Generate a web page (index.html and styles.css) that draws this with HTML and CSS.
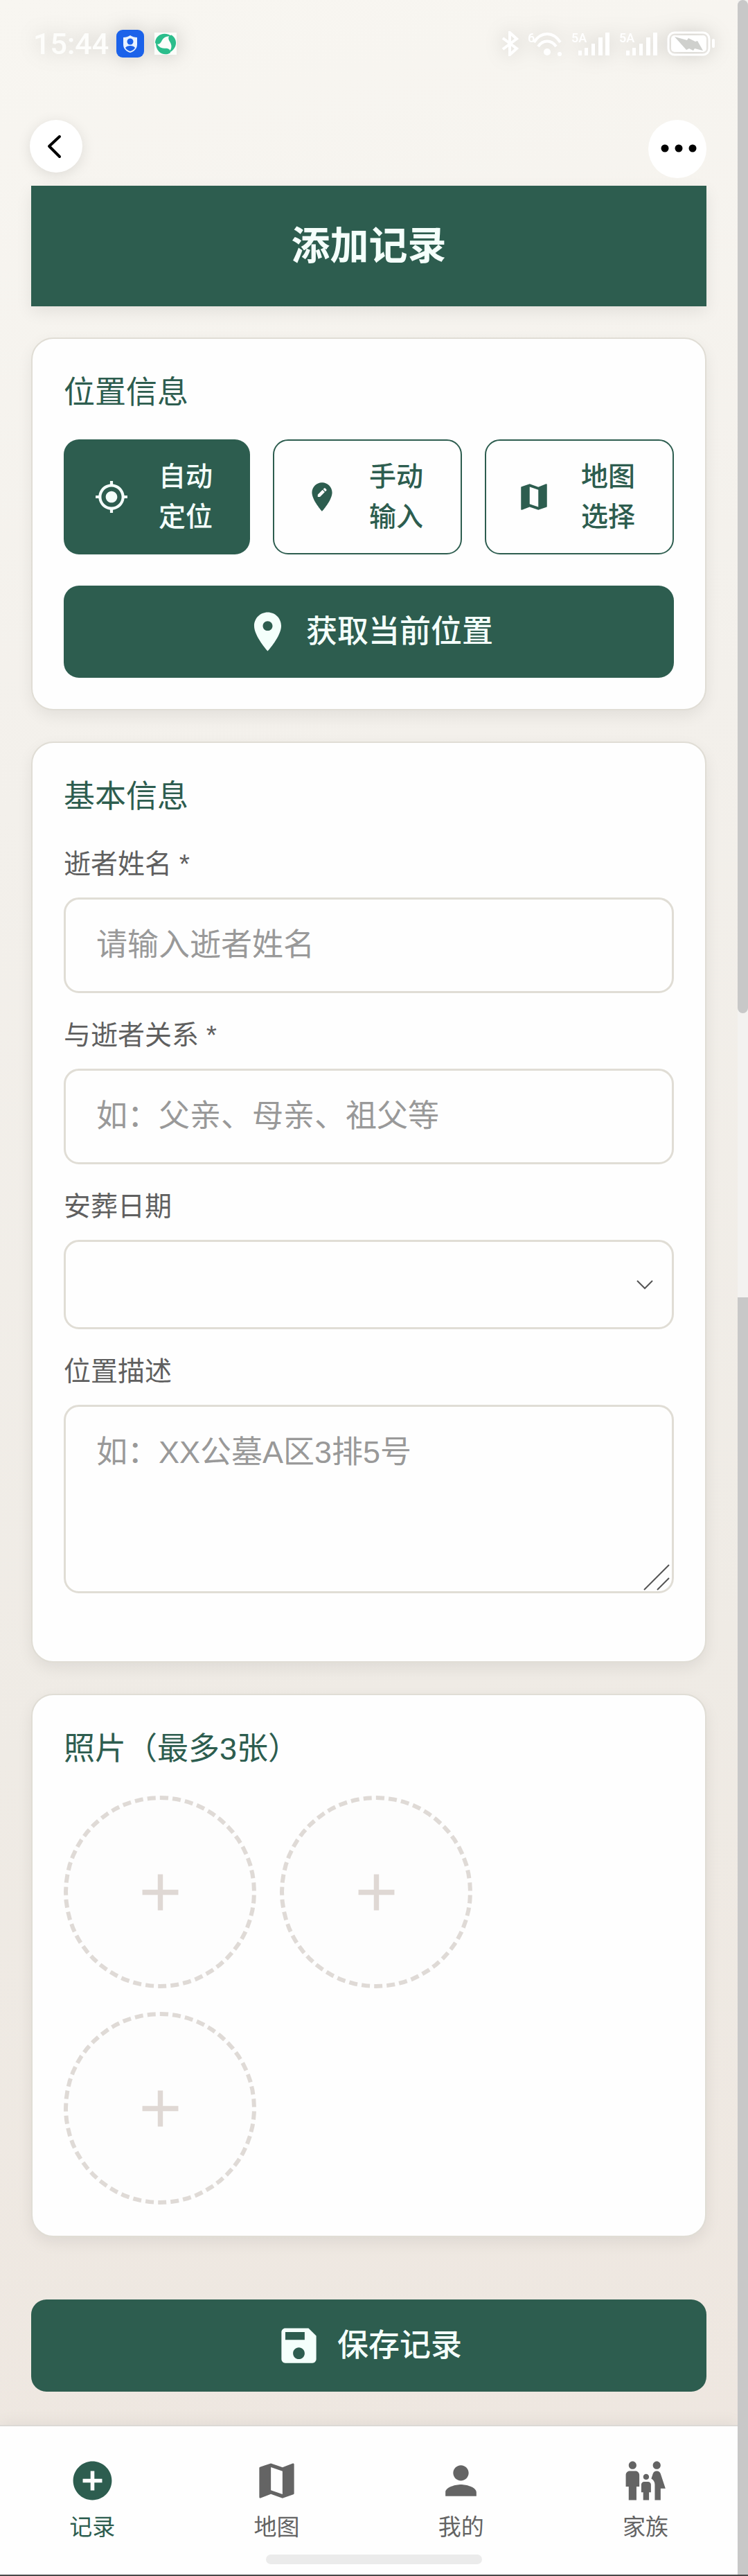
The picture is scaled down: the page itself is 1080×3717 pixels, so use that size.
FILE: index.html
```html
<!DOCTYPE html>
<html lang="zh-CN">
<head>
<meta charset="utf-8">
<meta name="viewport" content="width=device-width, initial-scale=1">
<title>添加记录</title>
<link rel="stylesheet" href="styles.css">
</head>
<body>
<div class="screen">
  <div class="app">
    <div class="status-bar">
      <div class="status-group status-left">
        <span class="clock">15:44</span>
        <svg class="badge-shield" viewBox="0 0 40 40" aria-hidden="true">
          <rect width="40" height="40" rx="9" fill="#1b62ea"/>
          <path d="M20 8c3 2 6 3 10 3v10c0 6-4 10-10 12-6-2-10-6-10-12V11c4 0 7-1 10-3z" fill="#e9f3ff"/>
          <circle cx="20" cy="17" r="4.500" fill="#1b62ea"/>
          <path d="M13 26c2-4 12-4 14 0-2 3-4 4-7 5-3-1-5-2-7-5z" fill="#1b62ea"/>
        </svg>
        <svg class="badge-swirl" viewBox="0 0 32 32" aria-hidden="true">
          <rect width="32" height="32" fill="#fbfdfa"/>
          <g fill="#2bbd8b">
            <path d="M1 15C1 3 15-3 26 6c-7-2-12 0-15 5-2 5-6 8-10 4z"/>
            <path d="M1 15C1 3 15-3 26 6c-7-2-12 0-15 5-2 5-6 8-10 4z" transform="rotate(120 16 16)"/>
            <path d="M1 15C1 3 15-3 26 6c-7-2-12 0-15 5-2 5-6 8-10 4z" transform="rotate(240 16 16)"/>
          </g>
        </svg>
      </div>
      <div class="status-group status-right">
        <svg class="bluetooth" viewBox="0 0 26 36" aria-hidden="true"><path d="M3 10l20 15-10 9V2l10 9L3 26" fill="none" stroke="#fff" stroke-width="4"/></svg>
        <svg class="wifi" viewBox="0 0 50 36" aria-hidden="true">
          <g fill="none" stroke="#fff" stroke-width="4"><path d="M9 16c10-16 28-16 38 0"/><path d="M15 22c7-10 19-10 26 0"/></g>
          <circle cx="28" cy="30" r="5" fill="#fff"/><circle cx="46" cy="33" r="3" fill="#fff"/>
          <text x="0" y="16" class="tiny">6</text>
        </svg>
        <svg class="signal" viewBox="0 0 56 36" aria-hidden="true">
          <text x="0" y="16" class="tiny">5A</text>
          <path d="M10 28h5v7h-5zM19 24h5v11h-5zM29 18h5v17h-5zM39 9h6v26h-6zM49 2h6v33h-6z" fill="#fff"/>
        </svg>
        <svg class="signal" viewBox="0 0 56 36" aria-hidden="true">
          <text x="0" y="16" class="tiny">5A</text>
          <path d="M10 28h5v7h-5zM19 24h5v11h-5zM29 18h5v17h-5zM39 9h6v26h-6zM49 2h6v33h-6z" fill="#fff"/>
        </svg>
        <svg class="battery" viewBox="0 0 70 36" aria-hidden="true">
          <rect x="2" y="2" width="59" height="32" rx="9" fill="none" stroke="#fff" stroke-width="3"/>
          <rect x="6" y="6" width="51" height="24" rx="5" fill="#fff"/>
          <path d="M11 8l18 5 2-3 10 5 3-1 8 14-12-3-2 3-6-3-4 2z" fill="#cfd0cd"/>
          <rect x="65" y="11" width="4" height="13" rx="2" fill="#fff"/>
        </svg>
      </div>
    </div>

    <div class="toolbar">
      <button class="round-btn back-btn" type="button" aria-label="返回">
        <svg viewBox="0 0 76 76" aria-hidden="true"><path d="M43 24L28 38l15 15" fill="none" stroke="#000" stroke-width="4" stroke-linecap="round" stroke-linejoin="round"/></svg>
      </button>
      <button class="round-btn more-btn" type="button" aria-label="更多">
        <svg viewBox="0 0 84 84" aria-hidden="true"><circle cx="24" cy="41" r="5.500"/><circle cx="44" cy="41" r="5.500"/><circle cx="64" cy="41" r="5.500"/></svg>
      </button>
    </div>

    <main class="content">
      <header class="page-header"><h1>添加记录</h1></header>

      <section class="card">
        <h2>位置信息</h2>
        <div class="modes">
          <button class="mode mode-active" type="button">
            <svg viewBox="0 0 24 24" aria-hidden="true"><path d="M12 8c-2.210 0-4 1.790-4 4s1.790 4 4 4 4-1.790 4-4-1.790-4-4-4zm8.940 3c-.46-4.170-3.770-7.480-7.940-7.940V1h-2v2.060C6.830 3.520 3.520 6.830 3.060 11H1v2h2.060c.46 4.170 3.770 7.480 7.940 7.940V23h2v-2.060c4.170-.46 7.480-3.770 7.940-7.940H23v-2h-2.060zM12 19c-3.870 0-7-3.130-7-7s3.130-7 7-7 7 3.130 7 7-3.130 7-7 7z"/></svg>
            <span>自动定位</span>
          </button>
          <button class="mode" type="button">
            <svg viewBox="0 0 24 24" aria-hidden="true"><path d="M12 2C8.140 2 5 5.140 5 9c0 5.250 7 13 7 13s7-7.750 7-13c0-3.860-3.140-7-7-7zm-1.440 10H9v-1.560l3.350-3.340 1.550 1.550L10.560 12zm4.450-4.450l-.7.7-1.550-1.550.7-.7c.2-.2.510-.2.710 0l.84.84c.2.2.2.510 0 .71z"/></svg>
            <span>手动输入</span>
          </button>
          <button class="mode" type="button">
            <svg viewBox="0 0 24 24" aria-hidden="true"><path d="M20.500 3l-.16.030L15 5.100 9 3 3.360 4.900c-.21.070-.36.250-.36.480V20.500c0 .28.220.5.500.5l.16-.03L9 18.900l6 2.100 5.640-1.900c.21-.07.360-.25.360-.48V3.500c0-.28-.22-.5-.5-.5zM15 19l-6-2.110V5l6 2.110V19z"/></svg>
            <span>地图选择</span>
          </button>
        </div>
        <button class="primary-btn" type="button">
          <svg viewBox="0 0 24 24" aria-hidden="true"><path d="M12 2C8.130 2 5 5.130 5 9c0 5.250 7 13 7 13s7-7.750 7-13c0-3.870-3.130-7-7-7zm0 9.500c-1.380 0-2.500-1.120-2.500-2.500s1.120-2.500 2.500-2.500 2.500 1.120 2.500 2.500-1.120 2.500-2.500 2.500z"/></svg>
          <span>获取当前位置</span>
        </button>
      </section>

      <section class="card card-form">
        <h2>基本信息</h2>
        <div class="fields">
          <div class="field">
            <label for="name">逝者姓名 *</label>
            <input id="name" type="text" placeholder="请输入逝者姓名">
          </div>
          <div class="field">
            <label for="relation">与逝者关系 *</label>
            <input id="relation" type="text" placeholder="如：父亲、母亲、祖父等">
          </div>
          <div class="field">
            <label for="date">安葬日期</label>
            <div class="control">
              <select id="date"><option value=""></option></select>
              <svg class="chevron" viewBox="0 0 24 14" aria-hidden="true"><path d="M1 1l11 11L23 1" fill="none" stroke="#555" stroke-width="2"/></svg>
            </div>
          </div>
          <div class="field">
            <label for="place">位置描述</label>
            <div class="control">
              <textarea id="place" placeholder="如：XX公墓A区3排5号"></textarea>
              <svg class="grip" viewBox="0 0 38 38" aria-hidden="true"><path d="M1 37L37 1M20 37l17-17" fill="none" stroke="#555" stroke-width="2"/></svg>
            </div>
          </div>
        </div>
      </section>

      <section class="card">
        <h2>照片（最多3张）</h2>
        <div class="photos">
          <button class="photo" type="button" aria-label="添加照片 1"><svg viewBox="0 0 24 24" aria-hidden="true"><path d="M19 13h-6v6h-2v-6H5v-2h6V5h2v6h6v2z"/></svg></button>
          <button class="photo" type="button" aria-label="添加照片 2"><svg viewBox="0 0 24 24" aria-hidden="true"><path d="M19 13h-6v6h-2v-6H5v-2h6V5h2v6h6v2z"/></svg></button>
          <button class="photo" type="button" aria-label="添加照片 3"><svg viewBox="0 0 24 24" aria-hidden="true"><path d="M19 13h-6v6h-2v-6H5v-2h6V5h2v6h6v2z"/></svg></button>
        </div>
      </section>

      <button class="primary-btn save-btn" type="submit">
        <svg viewBox="0 0 24 24" aria-hidden="true"><path d="M17 3H5c-1.110 0-2 .9-2 2v14c0 1.100.89 2 2 2h14c1.100 0 2-.9 2-2V7l-4-4zm-5 16c-1.660 0-3-1.340-3-3s1.340-3 3-3 3 1.340 3 3-1.340 3-3 3zm3-10H5V5h10v4z"/></svg>
        <span>保存记录</span>
      </button>
    </main>

    <nav class="tabs">
      <a class="tab tab-active" href="#record">
        <svg viewBox="0 0 24 24" aria-hidden="true"><path d="M12 2C6.480 2 2 6.480 2 12s4.480 10 10 10 10-4.480 10-10S17.520 2 12 2zm5 11h-4v4h-2v-4H7v-2h4V7h2v4h4v2z"/></svg>
        <span>记录</span>
      </a>
      <a class="tab" href="#map">
        <svg viewBox="0 0 24 24" aria-hidden="true"><path d="M20.500 3l-.16.030L15 5.100 9 3 3.360 4.900c-.21.070-.36.250-.36.480V20.500c0 .28.220.5.500.5l.16-.03L9 18.900l6 2.100 5.640-1.900c.21-.07.360-.25.360-.48V3.500c0-.28-.22-.5-.5-.5zM15 19l-6-2.110V5l6 2.110V19z"/></svg>
        <span>地图</span>
      </a>
      <a class="tab" href="#me">
        <svg viewBox="0 0 24 24" aria-hidden="true"><path d="M12 12c2.210 0 4-1.790 4-4s-1.790-4-4-4-4 1.790-4 4 1.790 4 4 4zm0 2c-2.670 0-8 1.340-8 4v2h16v-2c0-2.660-5.330-4-8-4z"/></svg>
        <span>我的</span>
      </a>
      <a class="tab" href="#family">
        <svg viewBox="0 0 24 24" aria-hidden="true"><path d="M16 4c0-1.110.89-2 2-2s2 .89 2 2-.89 2-2 2-2-.89-2-2zm4 18v-6h2.500l-2.540-7.630C19.680 7.550 18.920 7 18.060 7h-.12c-.86 0-1.630.55-1.900 1.370l-.86 2.580c1.080.6 1.820 1.730 1.820 3.050v8h3zm-7.500-10.500c.83 0 1.500-.67 1.500-1.500s-.67-1.500-1.500-1.500S11 9.170 11 10s.67 1.500 1.500 1.500zM5.500 6c1.110 0 2-.89 2-2s-.89-2-2-2-2 .89-2 2 .89 2 2 2zm2 16v-7H9V9c0-1.100-.9-2-2-2H4c-1.100 0-2 .9-2 2v6h1.500v7h4zm6.500 0v-4h1v-4c0-.82-.68-1.500-1.500-1.500h-2c-.82 0-1.500.68-1.500 1.500v4h1v4h3z"/></svg>
        <span>家族</span>
      </a>
    </nav>
  </div>
  <div class="rail" aria-hidden="true">
    <div class="thumb thumb-first"></div>
    <div class="rail-space"></div>
    <div class="thumb thumb-last"></div>
  </div>
  <div class="home-indicator"></div>
</div>
</body>
</html>
```
FILE: styles.css
```css
:root {
  --green: #2d5d4f;
  --line: #e0ddd5;
  --muted: #5f5f5f;
}

* { box-sizing: border-box; }

body {
  margin: 0;
  font-family: "Liberation Sans", "Noto Sans CJK SC", sans-serif;
  color: var(--muted);
}

h1, h2 { margin: 0; font-weight: 400; }

button, input, select, textarea { font: inherit; }

button { border: 0; padding: 0; cursor: pointer; }

svg { display: block; flex: none; fill: currentColor; }

.screen {
  position: relative;
  display: flex;
  min-height: 100vh;
  border-bottom: 2px solid #4a4a4a;
}

.app {
  flex: 1;
  min-width: 0;
  display: flex;
  flex-direction: column;
  background: linear-gradient(170deg, #f8f6f1 0%, #f3f0eb 30%, #efebe5 65%, #eee6df 100%);
}

/* Status bar */
.status-bar {
  display: flex;
  justify-content: space-between;
  align-items: center;
  padding: 43px 32px 0 48px;
}

.status-group {
  display: flex;
  align-items: center;
  height: 40px;
  filter: drop-shadow(0 0 14px rgba(0, 0, 0, .18));
}

.status-right { gap: 13px; }

.clock {
  margin-right: 11px;
  font-family: Roboto, sans-serif;
  font-size: 43px;
  font-weight: 500;
  line-height: 40px;
  color: #fdfdfb;
}

.badge-shield { width: 40px; height: 40px; margin-right: 15px; }
.badge-swirl { width: 32px; height: 32px; }
.bluetooth { width: 26px; height: 36px; }
.wifi { width: 50px; height: 36px; overflow: visible; }
.signal { width: 56px; height: 36px; overflow: visible; }
.battery { width: 70px; height: 36px; }
.tiny { font: 500 18px Roboto, sans-serif; fill: #fff; }

/* Floating controls */
.toolbar {
  display: flex;
  justify-content: space-between;
  align-items: flex-start;
  padding: 90px 45px 11px 43px;
}

.round-btn { border-radius: 50%; background: #fff; color: #000; }
.back-btn { width: 76px; height: 76px; box-shadow: 0 4px 20px rgba(0, 0, 0, .1); }
.more-btn { width: 84px; height: 84px; }

/* Content */
.content {
  display: flex;
  flex-direction: column;
  gap: 45px;
  padding: 0 45px 48px;
}

.page-header {
  padding: 45px;
  background: var(--green);
  box-shadow: 0 8px 22px rgba(0, 0, 0, .08);
  text-align: center;
}

.page-header h1 {
  font-size: 56px;
  font-weight: 700;
  line-height: 84px;
  color: #f4fffb;
}

.card {
  padding: 45px;
  border: 2px solid var(--line);
  border-radius: 32px;
  background: #fefefe;
  box-shadow: 0 8px 22px rgba(0, 0, 0, .07);
}

.card-form { padding-bottom: 98px; }

.card h2 {
  margin-bottom: 35px;
  font-size: 45px;
  line-height: 65px;
  color: var(--green);
}

.modes { display: flex; gap: 33px; margin-bottom: 45px; }

.mode {
  flex: 1 1 0;
  display: flex;
  align-items: center;
  gap: 43px;
  padding: 23px 44px;
  border: 2px solid var(--green);
  border-radius: 22px;
  background: #fefefe;
  color: var(--green);
  font-size: 39px;
  font-weight: 500;
  line-height: 58px;
}

.mode svg { width: 50px; height: 50px; }
.mode span { flex: none; width: 2em; text-align: left; }
.mode-active { border: 0; background: var(--green); color: #f4fffb; }

.primary-btn {
  display: flex;
  justify-content: center;
  align-items: center;
  gap: 22px;
  width: 100%;
  padding: 33px;
  border-radius: 22px;
  background: var(--green);
  color: #f4fffb;
  font-size: 45px;
  font-weight: 500;
  line-height: 60px;
}

.primary-btn svg { width: 67px; height: 67px; }
.save-btn { margin-top: 45px; }

/* Form */
.fields { display: flex; flex-direction: column; gap: 31px; }

.field label {
  display: block;
  margin-bottom: 18px;
  font-size: 39px;
  line-height: 60px;
}

.control { position: relative; }

.field input, .field select, .field textarea {
  display: block;
  width: 100%;
  padding: 36px 44px;
  border: 3px solid var(--line);
  border-radius: 22px;
  outline: 0;
  background: #fefefe;
  color: #333;
  font-size: 45px;
  line-height: 60px;
}

.field input { height: 138px; }
.field select { height: 129px; appearance: none; }
.field textarea { height: 272px; resize: none; }
.field ::placeholder { color: #999; opacity: 1; }

.chevron { position: absolute; right: 30px; top: 58px; width: 24px; height: 14px; }
.grip { position: absolute; right: 6px; bottom: 4px; width: 38px; height: 38px; }

/* Photos */
.photos { display: flex; flex-wrap: wrap; gap: 34px; }

.photo {
  display: grid;
  place-items: center;
  width: 278px;
  height: 278px;
  border: 6px dashed #dfdad6;
  border-radius: 50%;
  background: #fdfdfd;
  color: #dfd8d4;
}

.photo svg { width: 89px; height: 89px; }

/* Bottom tabs */
.tabs {
  display: flex;
  margin-top: auto;
  padding: 45px 0;
  border-top: 2px solid #dcd9d5;
  background: #fefefe;
  box-shadow: 0 -4px 20px rgba(0, 0, 0, .05);
}

.tab {
  flex: 1;
  display: flex;
  flex-direction: column;
  align-items: center;
  gap: 11px;
  color: #646464;
  font-size: 33px;
  line-height: 46px;
  text-decoration: none;
}

.tab svg { width: 67px; height: 67px; }
.tab-active { color: var(--green); }

.home-indicator {
  position: absolute;
  left: 50%;
  bottom: 15px;
  width: 312px;
  height: 14px;
  margin-left: -156px;
  border-radius: 7px;
  background: #ebebeb;
}

/* Scroll rail */
.rail {
  display: flex;
  flex-direction: column;
  width: 15px;
  background: #f3f2f0;
}

.rail-space { flex: 410; }
.thumb { background: #c8c8c8; }
.thumb-first { flex: 1463; border-radius: 8px; }
.thumb-last { flex: 1844; }
```
